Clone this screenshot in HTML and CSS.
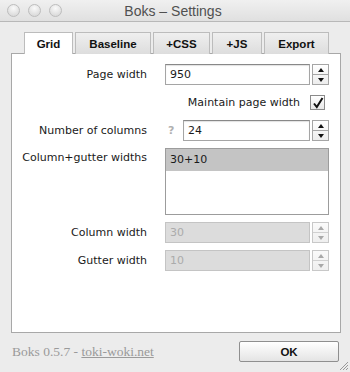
FILE: index.html
```html
<!DOCTYPE html>
<html lang="en">
<head>
    <meta charset="UTF-8">
    <title>Boks – Settings</title>
    <link rel="stylesheet" href="styles.css">
</head>
<body>
    <div class="window">
        <div class="titlebar">
            <div class="lights">
                <span class="light"></span>
                <span class="light"></span>
                <span class="light"></span>
            </div>
            <div class="title">Boks – Settings</div>
        </div>

        <div class="tabs">
            <div class="tab active tab-grid">Grid</div>
            <div class="tab tab-baseline">Baseline</div>
            <div class="tab tab-css">+CSS</div>
            <div class="tab tab-js">+JS</div>
            <div class="tab tab-export">Export</div>
        </div>

        <div class="panel">
            <div class="form">
                <label class="label">Page width</label>
                <div class="field">
                    <div class="input">950</div>
                    <div class="stepper">
                        <span class="step up"></span>
                        <span class="step down"></span>
                    </div>
                </div>

                <div class="check-row">
                    <span>Maintain page width</span>
                    <span class="checkbox">
                        <svg width="12" height="12" viewBox="0 0 12 12"><path d="M2 6.5 L4.8 10 L10.5 1" fill="none" stroke="#111" stroke-width="2"/></svg>
                    </span>
                </div>

                <label class="label">Number of columns</label>
                <div class="field">
                    <span class="help">?</span>
                    <div class="input">24</div>
                    <div class="stepper">
                        <span class="step up"></span>
                        <span class="step down"></span>
                    </div>
                </div>

                <label class="label label-top">Column+gutter widths</label>
                <div class="list">
                    <div class="list-item selected">30+10</div>
                </div>

                <label class="label">Column width</label>
                <div class="field disabled">
                    <div class="input">30</div>
                    <div class="stepper">
                        <span class="step up"></span>
                        <span class="step down"></span>
                    </div>
                </div>

                <label class="label">Gutter width</label>
                <div class="field disabled">
                    <div class="input">10</div>
                    <div class="stepper">
                        <span class="step up"></span>
                        <span class="step down"></span>
                    </div>
                </div>
            </div>
        </div>

        <div class="footer">
            <div class="credit">Boks 0.5.7 - <a href="#">toki-woki.net</a></div>
            <button class="ok">OK</button>
        </div>

        <svg class="grip" width="10" height="10" viewBox="0 0 10 10">
            <path d="M9 1 L1 9 M9 4 L4 9 M9 7 L7 9" stroke="#999" stroke-width="1"/>
        </svg>
    </div>
</body>
</html>
```

FILE: styles.css
```css
body {
    margin: 0;
    background: #ececec;
    font-family: "DejaVu Sans", Verdana, sans-serif;
    font-size: 11px;
    color: #1a1a1a;
}
.window {
    position: relative;
    width: 350px;
    height: 372px;
    display: flex;
    flex-direction: column;
}
.titlebar {
    height: 21px;
    display: flex;
    align-items: center;
    position: relative;
    background: linear-gradient(#f0f0f0, #e0e0e0);
    border-bottom: 1px solid #b8b8b8;
}
.lights {
    display: flex;
    gap: 8px;
    padding-left: 7px;
}
.light {
    width: 13px;
    height: 13px;
    box-sizing: border-box;
    border-radius: 50%;
    border: 1px solid #bdbdbd;
    background: radial-gradient(circle at 50% 30%, #fafafa, #dcdcdc 75%);
}
.title {
    flex: 1;
    text-align: center;
    margin-right: 66px;
    font-family: "Liberation Sans", Arial, sans-serif;
    font-size: 14px;
    color: #505050;
}
.tabs {
    display: flex;
    gap: 2px;
    margin-top: 10px;
    padding-left: 24px;
    height: 21px;
    position: relative;
    z-index: 1;
}
.tab {
    box-sizing: border-box;
    height: 22px;
    border: 1px solid #bcbcbc;
    border-bottom: none;
    background: linear-gradient(#efefef, #dddddd);
    font-family: "Liberation Sans", Arial, sans-serif;
    font-weight: bold;
    font-size: 11.5px;
    text-align: center;
    line-height: 22px;
    color: #111;
}
.tab.active {
    background: #fff;
}
.tab-grid { width: 49px; }
.tab-baseline { width: 76px; }
.tab-css { width: 57px; }
.tab-js { width: 50px; }
.tab-export { width: 65px; }
.panel {
    box-sizing: border-box;
    margin-left: 11px;
    width: 330px;
    height: 280px;
    background: #fff;
    border: 1px solid #a8a8a8;
    padding: 10px 10px 0 0;
}
.form {
    display: grid;
    grid-template-columns: 135px 164px;
    grid-template-rows: 21px 21px 21px 67px 21px 21px;
    column-gap: 18px;
    row-gap: 7px;
}
.label {
    text-align: right;
    line-height: 21px;
}
.label-top {
    line-height: 20px;
    align-self: start;
}
.field {
    display: flex;
    align-items: stretch;
    height: 21px;
}
.input {
    box-sizing: border-box;
    flex: 1;
    height: 21px;
    margin-right: 2px;
    border: 1px solid #a5a5a5;
    border-top-color: #888;
    box-shadow: inset 0 1px 1px rgba(0, 0, 0, 0.12);
    padding-left: 4px;
    line-height: 19px;
    background: #fff;
}
.help {
    width: 18px;
    color: #b0b0b0;
    font-weight: bold;
    line-height: 21px;
    padding-left: 3px;
    box-sizing: border-box;
}
.stepper {
    box-sizing: border-box;
    width: 17px;
    height: 21px;
    border: 1px solid #a5a5a5;
    display: flex;
    flex-direction: column;
    background: linear-gradient(#ffffff, #ededed);
}
.step {
    flex: 1;
    display: flex;
    align-items: center;
    justify-content: center;
}
.step.up {
    border-bottom: 1px solid #a5a5a5;
}
.step.up::before {
    content: "";
    border-left: 3.5px solid transparent;
    border-right: 3.5px solid transparent;
    border-bottom: 4px solid #111;
}
.step.down::before {
    content: "";
    border-left: 3.5px solid transparent;
    border-right: 3.5px solid transparent;
    border-top: 4px solid #111;
}
.check-row {
    grid-column: 1 / 3;
    display: flex;
    justify-content: flex-end;
    align-items: center;
    gap: 10px;
    padding-right: 4px;
}
.checkbox {
    box-sizing: border-box;
    width: 15px;
    height: 15px;
    border: 1px solid #8a8a8a;
    background: linear-gradient(#ffffff, #e8e8e8);
    display: flex;
    align-items: center;
    justify-content: center;
}
.list {
    box-sizing: border-box;
    height: 67px;
    border: 1px solid #9c9c9c;
    background: #fff;
}
.list-item {
    height: 22px;
    line-height: 22px;
    padding-left: 4px;
}
.list-item.selected {
    background: #c4c4c4;
}
.disabled .input {
    background: #dcdcdc;
    border-color: #c4c4c4;
    box-shadow: none;
    color: #ababab;
}
.disabled .stepper {
    border-color: #c8c8c8;
    background: linear-gradient(#fafafa, #efefef);
}
.disabled .step.up {
    border-bottom-color: #d0d0d0;
}
.disabled .step.up::before {
    border-bottom-color: #a8a8a8;
}
.disabled .step.down::before {
    border-top-color: #a8a8a8;
}
.footer {
    display: flex;
    justify-content: space-between;
    align-items: center;
    padding: 8px 11px 0 12px;
}
.credit {
    font-family: "Liberation Serif", "Times New Roman", serif;
    font-size: 13.5px;
    color: #9a9a9a;
}
.credit a {
    color: #9a9a9a;
}
.ok {
    width: 100px;
    height: 21px;
    border: 1px solid #8f8f8f;
    border-radius: 2px;
    background: linear-gradient(#ffffff, #e4e4e4);
    font-family: "Liberation Sans", Arial, sans-serif;
    font-weight: bold;
    font-size: 11.5px;
    color: #111;
}
.grip {
    position: absolute;
    right: 1px;
    bottom: 1px;
}
```
